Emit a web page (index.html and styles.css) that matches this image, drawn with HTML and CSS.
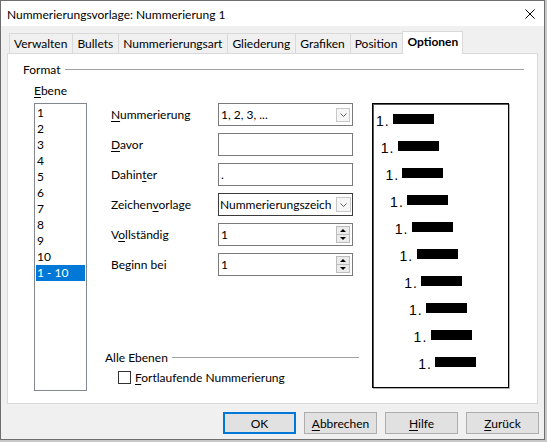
FILE: index.html
```html
<!DOCTYPE html>
<html lang="de">
<head>
  <meta charset="UTF-8">
  <title>Nummerierungsvorlage: Nummerierung 1</title>
  <link rel="stylesheet" href="styles.css">
</head>
<body>
  <div class="dialog">
    <div class="titlebar">
      <span class="title">Nummerierungsvorlage: Nummerierung 1</span>
      <svg class="close" viewBox="0 0 10 10" aria-label="Schließen">
        <path d="M0.5 0.5 L9.5 9.5 M9.5 0.5 L0.5 9.5" stroke="#000" stroke-width="1"/>
      </svg>
    </div>

    <div class="tabs">
      <div class="tab">Verwalten</div>
      <div class="tab">Bullets</div>
      <div class="tab">Nummerierungsart</div>
      <div class="tab">Gliederung</div>
      <div class="tab">Grafiken</div>
      <div class="tab">Position</div>
      <div class="tab active">Optionen</div>
    </div>

    <div class="panel">
      <div class="group-title"><span>Format</span><span class="rule"></span></div>
      <div class="ebene-label"><u>E</u>bene</div>

      <div class="format">
        <ul class="levels" id="levels"></ul>

        <div class="settings">
          <div class="form">
            <label><u>N</u>ummerierung</label>
            <div class="field combo">
              <span>1, 2, 3, ...</span>
              <span class="arrow"><svg viewBox="0 0 7 4"><path d="M0.5 0.5 L3.5 3.5 L6.5 0.5" fill="none" stroke="#606060"/></svg></span>
            </div>

            <label><u>D</u>avor</label>
            <div class="field"></div>

            <label>Dahin<u>t</u>er</label>
            <div class="field"><span>.</span></div>

            <label>Zeichen<u>v</u>orlage</label>
            <div class="field combo focus">
              <span class="clip">Nummerierungszeich</span>
              <span class="arrow"><svg viewBox="0 0 7 4"><path d="M0.5 0.5 L3.5 3.5 L6.5 0.5" fill="none" stroke="#606060"/></svg></span>
            </div>

            <label>V<u>o</u>llständig</label>
            <div class="field spin">
              <span>1</span>
              <span class="spinner"><span class="up"></span><span class="down"></span></span>
            </div>

            <label>Beginn bei</label>
            <div class="field spin">
              <span>1</span>
              <span class="spinner"><span class="up"></span><span class="down"></span></span>
            </div>
          </div>

          <div class="all-levels">
            <div class="group-title"><span>Alle Ebenen</span><span class="rule"></span></div>
            <label class="check"><span class="box"></span><span><u>F</u>ortlaufende Nummerierung</span></label>
          </div>
        </div>

        <div class="preview" id="preview"></div>
      </div>
    </div>

    <div class="buttons">
      <button class="default">OK</button>
      <button><u>A</u>bbrechen</button>
      <button><u>H</u>ilfe</button>
      <button><u>Z</u>urück</button>
    </div>
  </div>

  <script>
    const levels = ['1', '2', '3', '4', '5', '6', '7', '8', '9', '10', '1 - 10'];
    const selected = 10;

    const list = document.getElementById('levels');
    levels.forEach((name, i) => {
      const li = document.createElement('li');
      li.textContent = name;
      if (i === selected) li.className = 'selected';
      list.appendChild(li);
    });

    // Vorschau: jede Ebene ein Stück weiter eingerückt
    const preview = document.getElementById('preview');
    for (let i = 0; i < 10; i++) {
      const row = document.createElement('div');
      row.className = 'preview-row';
      row.style.paddingLeft = (3 + i * 4.7) + 'px';
      row.innerHTML = '<span class="num">1.</span><span class="bar"></span>';
      preview.appendChild(row);
    }
  </script>
</body>
</html>
```

FILE: styles.css
```css
* {
  box-sizing: border-box;
}
body {
  margin: 0;
  background-color: #c8c8c8;
  font-family: Lato, 'Liberation Sans', sans-serif;
  font-size: 12px;
  color: #000;
}
u {
  text-decoration-thickness: 1px;
  text-underline-offset: 2px;
}
.dialog {
  width: 545px;
  height: 440px;
  border: 1px solid #6e6e6e;
  background-color: #f0f0f0;
  display: flex;
  flex-direction: column;
}
.titlebar {
  height: 25px;
  flex-shrink: 0;
  background-color: #fff;
  display: flex;
  justify-content: space-between;
  align-items: center;
  padding: 1px 9px 0 6px;
}
.titlebar .close {
  width: 10px;
  height: 10px;
}

/* Reiter */
.tabs {
  height: 27px;
  flex-shrink: 0;
  display: flex;
  align-items: flex-end;
  padding-left: 8px;
}
.tab {
  height: 20px;
  line-height: 19px;
  padding: 0 5px 0 4px;
  border: 1px solid #d9d9d9;
  border-bottom: none;
  margin-right: -1px;
  background-color: #f0f0f0;
}
.tab.active {
  position: relative;
  z-index: 1;
  height: 23px;
  margin-bottom: -1px;
  padding: 0 4px;
  line-height: 20px;
  background-color: #fff;
  font-weight: bold;
}

.panel {
  height: 351px;
  flex-shrink: 0;
  margin: 0 6px;
  border: 1px solid #d9d9d9;
  background-color: #fff;
  padding: 8px 13px 0 15px;
}
.group-title {
  display: flex;
  align-items: center;
  gap: 4px;
  height: 15px;
}
.group-title .rule {
  flex: 1;
  border-top: 1px solid #a0a0a0;
}
.ebene-label {
  height: 15px;
  line-height: 15px;
  margin: 6px 0 5px 11px;
}

.format {
  display: flex;
  align-items: flex-start;
  padding-left: 11px;
}
.levels {
  list-style: none;
  margin: 0;
  width: 53px;
  height: 288px;
  border: 1px solid #828790;
  padding: 1px 0 0;
}
.levels li {
  height: 16px;
  line-height: 16px;
  margin: 0 1px;
  padding-left: 1px;
}
.levels li.selected {
  background-color: #0078d7;
  color: #fff;
}

.settings {
  margin-left: 18px;
  width: 254px;
  height: 288px;
  display: flex;
  flex-direction: column;
  justify-content: space-between;
  padding-bottom: 6px;
}
.form {
  display: grid;
  grid-template-columns: 107px 135px;
  grid-auto-rows: 23px;
  row-gap: 7px;
  align-items: center;
  padding-left: 6px;
}
.field {
  height: 23px;
  border: 1px solid #7a7a7a;
  padding: 0 2px;
  display: flex;
  align-items: center;
  justify-content: space-between;
  white-space: nowrap;
  overflow: hidden;
}
.field.focus {
  border-color: #3c3c3c;
  padding: 0 1px;
}
.field .clip {
  overflow: hidden;
  flex: 1;
}
.arrow {
  flex-shrink: 0;
  width: 14px;
  height: 14px;
  border: 1px solid #c8c8c8;
  background-color: #f6f6f6;
  display: flex;
  align-items: center;
  justify-content: center;
}
.focus .arrow {
  width: 15px;
  height: 15px;
}
.arrow svg {
  width: 7px;
  height: 4px;
}
.spinner {
  flex-shrink: 0;
  width: 14px;
  height: 17px;
  border: 1px solid #bcbcbc;
  background-color: #ececec;
  display: flex;
  flex-direction: column;
}
.spinner span {
  flex: 1;
  display: flex;
  align-items: center;
  justify-content: center;
}
.spinner .up {
  border-bottom: 1px solid #bcbcbc;
}
.spinner .up::after {
  content: '';
  border: 3px solid transparent;
  border-bottom: 3px solid #000;
  border-top: none;
}
.spinner .down::after {
  content: '';
  border: 3px solid transparent;
  border-top: 3px solid #000;
  border-bottom: none;
}

.all-levels .group-title {
  margin-bottom: 5px;
}
.check {
  display: flex;
  align-items: center;
  gap: 4px;
  height: 15px;
  padding-left: 13px;
}
.check .box {
  width: 13px;
  height: 13px;
  border: 1px solid #333;
  background-color: #fff;
}

/* Vorschau */
.preview {
  margin-left: 13px;
  width: 137px;
  height: 285px;
  border: 1px solid #000;
  box-shadow: inset 1px 1px 0 #5a5a5a, 1px 1px 0 #b4b4b4;
  padding-top: 1px;
}
.preview-row {
  height: 27px;
  display: flex;
  align-items: center;
}
.preview-row .num {
  font-family: 'Liberation Sans', sans-serif;
  font-size: 14px;
  line-height: 14px;
  letter-spacing: 1px;
  padding-top: 4px;
  width: 17px;
}
.preview-row .bar {
  width: 41px;
  height: 10px;
  background-color: #000;
}

.buttons {
  display: flex;
  justify-content: flex-end;
  gap: 8px;
  margin-top: 8px;
  padding-right: 5px;
}
.buttons button {
  width: 73px;
  height: 22px;
  border: 1px solid #adadad;
  background-color: #e1e1e1;
  font-family: inherit;
  font-size: 12px;
  color: #000;
  padding: 0;
}
.buttons button.default {
  border: 2px solid #0078d7;
}
```
